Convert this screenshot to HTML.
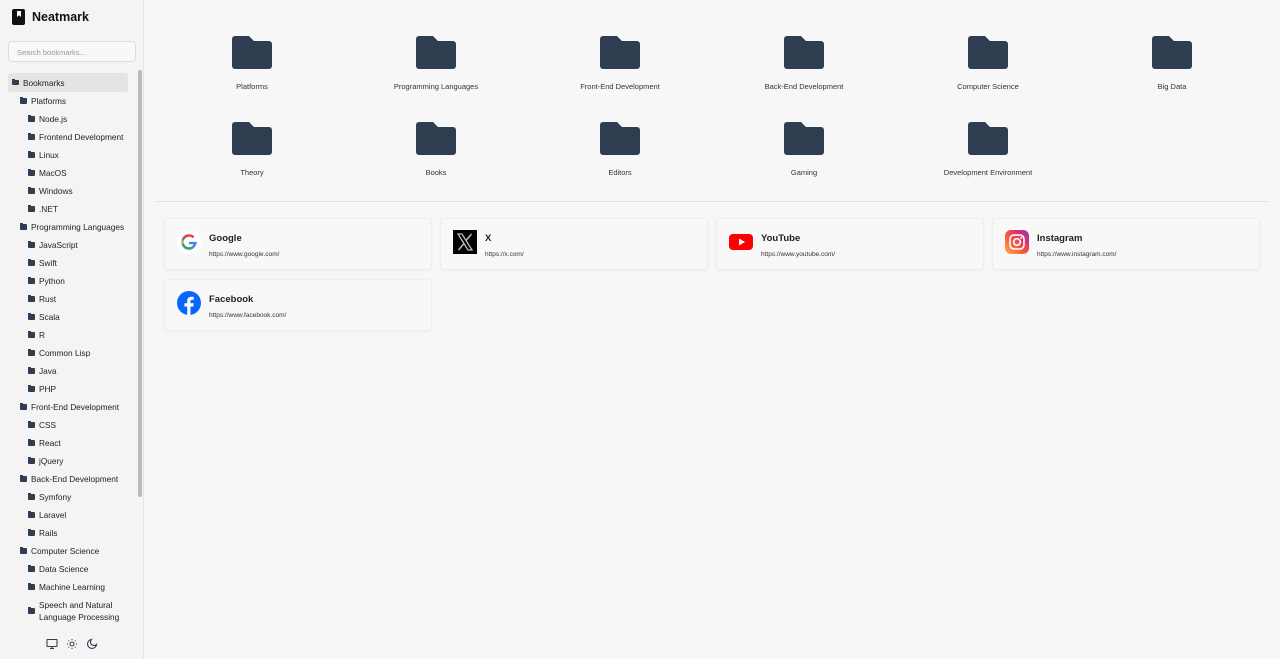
<!DOCTYPE html>
<html><head><meta charset="utf-8"><style>
*{box-sizing:border-box;margin:0;padding:0}
body{width:1280px;height:659px;overflow:hidden;background:#f7f7f7;font-family:"Liberation Sans",sans-serif;color:#222;position:relative}
.side{position:absolute;left:0;top:0;width:144px;height:659px;background:#f4f4f4;border-right:1px solid #e6e6e6}
.logo{position:absolute;left:12px;top:9px;width:13px;height:16px;background:#111;border-radius:2px}
.logo:after{content:"";position:absolute;left:5px;top:2px;width:4px;height:6px;background:#fff;clip-path:polygon(0 0,100% 0,100% 100%,50% 70%,0 100%)}
.brand{position:absolute;left:32px;top:10px;font-size:12.5px;font-weight:bold;color:#111}
.search{position:absolute;left:8px;top:41px;width:128px;height:21px;border:1px solid #ddd;border-radius:4px;background:#f8f8f8;font-size:7.5px;color:#999;padding:6px 8px}
.tree{position:absolute;left:8px;top:73px;width:120px}
.it{height:18px;display:flex;align-items:center;font-size:8.3px;color:#222;white-space:nowrap}
.it i{display:inline-block;width:7px;height:5.5px;background:#2f3d50;border-radius:1px;margin-right:4px;position:relative}
.it i:before{content:"";position:absolute;left:0;top:-1px;width:3px;height:1.5px;background:#2f3d50}
.l0{padding-left:4px;background:#e4e4e4;border-radius:3px;height:19px}
.l1{padding-left:12px}.l2{padding-left:20px}
.sb{position:absolute;left:138px;top:70px;width:4px;height:427px;background:#bbb;border-radius:2px}
.bot{position:absolute;top:638px;font-size:10px;color:#333}
.grid{position:absolute;left:160px;top:36px;width:1104px;display:flex;flex-wrap:wrap}
.f{width:184px;height:86px;text-align:center}
.f .ic{width:40px;height:33px;margin:0 auto;position:relative;display:block}
.f span{display:block;font-size:7.5px;color:#333;margin-top:13px}
hr{position:absolute;left:156px;top:201px;width:1112px;border:0;border-top:1px solid #e2e2e2}
.card{position:absolute;width:268px;height:52px;background:#f8f8f8;border:1px solid #eee;border-radius:4px;box-shadow:0 1px 2px rgba(0,0,0,.04)}
.card .t{position:absolute;left:44px;top:14px;font-size:9.5px;font-weight:bold;color:#222}
.card .u{position:absolute;left:44px;top:32px;font-size:6.5px;color:#333}
.card .g{position:absolute;left:12px;top:11px;width:24px;height:24px}
</style></head><body>
<div class="side">
<div class="logo"></div><div class="brand">Neatmark</div>
<div class="search">Search bookmarks...</div>
<div class="tree">
<div class="it l0"><i></i>Bookmarks</div>
<div class="it l1"><i></i>Platforms</div>
<div class="it l2"><i></i>Node.js</div>
<div class="it l2"><i></i>Frontend Development</div>
<div class="it l2"><i></i>Linux</div>
<div class="it l2"><i></i>MacOS</div>
<div class="it l2"><i></i>Windows</div>
<div class="it l2"><i></i>.NET</div>
<div class="it l1"><i></i>Programming Languages</div>
<div class="it l2"><i></i>JavaScript</div>
<div class="it l2"><i></i>Swift</div>
<div class="it l2"><i></i>Python</div>
<div class="it l2"><i></i>Rust</div>
<div class="it l2"><i></i>Scala</div>
<div class="it l2"><i></i>R</div>
<div class="it l2"><i></i>Common Lisp</div>
<div class="it l2"><i></i>Java</div>
<div class="it l2"><i></i>PHP</div>
<div class="it l1"><i></i>Front-End Development</div>
<div class="it l2"><i></i>CSS</div>
<div class="it l2"><i></i>React</div>
<div class="it l2"><i></i>jQuery</div>
<div class="it l1"><i></i>Back-End Development</div>
<div class="it l2"><i></i>Symfony</div>
<div class="it l2"><i></i>Laravel</div>
<div class="it l2"><i></i>Rails</div>
<div class="it l1"><i></i>Computer Science</div>
<div class="it l2"><i></i>Data Science</div>
<div class="it l2"><i></i>Machine Learning</div>
<div class="it l2" style="height:30px;white-space:normal;line-height:12px"><i style="flex:none"></i>Speech and Natural Language Processing</div>
</div>
<div class="sb"></div>
<svg class="bot" style="left:46px" width="12" height="12" viewBox="0 0 24 24" fill="none" stroke="#2f3d50" stroke-width="2.2"><rect x="2" y="3" width="20" height="14" rx="1"/><path d="M8 21h8M12 17v4"/></svg>
<svg class="bot" style="left:66px" width="12" height="12" viewBox="0 0 24 24" fill="none" stroke="#2f3d50" stroke-width="2"><circle cx="12" cy="12" r="4"/><path d="M12 2v2M12 20v2M2 12h2M20 12h2M4.9 4.9l1.4 1.4M17.7 17.7l1.4 1.4M4.9 19.1l1.4-1.4M17.7 6.3l1.4-1.4"/></svg>
<svg class="bot" style="left:86px" width="12" height="12" viewBox="0 0 24 24" fill="none" stroke="#2f3d50" stroke-width="2.2"><path d="M21 13A9 9 0 1 1 11 3a7 7 0 0 0 10 10z"/></svg>
</div>
<div class="grid">
<div class="f"><svg class="ic" viewBox="0 0 40 33"><path d="M3 0h14l5 5h15a3 3 0 0 1 3 3v22a3 3 0 0 1-3 3H3a3 3 0 0 1-3-3V3a3 3 0 0 1 3-3z" fill="#2f3d50"/></svg><span>Platforms</span></div>
<div class="f"><svg class="ic" viewBox="0 0 40 33"><path d="M3 0h14l5 5h15a3 3 0 0 1 3 3v22a3 3 0 0 1-3 3H3a3 3 0 0 1-3-3V3a3 3 0 0 1 3-3z" fill="#2f3d50"/></svg><span>Programming Languages</span></div>
<div class="f"><svg class="ic" viewBox="0 0 40 33"><path d="M3 0h14l5 5h15a3 3 0 0 1 3 3v22a3 3 0 0 1-3 3H3a3 3 0 0 1-3-3V3a3 3 0 0 1 3-3z" fill="#2f3d50"/></svg><span>Front-End Development</span></div>
<div class="f"><svg class="ic" viewBox="0 0 40 33"><path d="M3 0h14l5 5h15a3 3 0 0 1 3 3v22a3 3 0 0 1-3 3H3a3 3 0 0 1-3-3V3a3 3 0 0 1 3-3z" fill="#2f3d50"/></svg><span>Back-End Development</span></div>
<div class="f"><svg class="ic" viewBox="0 0 40 33"><path d="M3 0h14l5 5h15a3 3 0 0 1 3 3v22a3 3 0 0 1-3 3H3a3 3 0 0 1-3-3V3a3 3 0 0 1 3-3z" fill="#2f3d50"/></svg><span>Computer Science</span></div>
<div class="f"><svg class="ic" viewBox="0 0 40 33"><path d="M3 0h14l5 5h15a3 3 0 0 1 3 3v22a3 3 0 0 1-3 3H3a3 3 0 0 1-3-3V3a3 3 0 0 1 3-3z" fill="#2f3d50"/></svg><span>Big Data</span></div>
<div class="f"><svg class="ic" viewBox="0 0 40 33"><path d="M3 0h14l5 5h15a3 3 0 0 1 3 3v22a3 3 0 0 1-3 3H3a3 3 0 0 1-3-3V3a3 3 0 0 1 3-3z" fill="#2f3d50"/></svg><span>Theory</span></div>
<div class="f"><svg class="ic" viewBox="0 0 40 33"><path d="M3 0h14l5 5h15a3 3 0 0 1 3 3v22a3 3 0 0 1-3 3H3a3 3 0 0 1-3-3V3a3 3 0 0 1 3-3z" fill="#2f3d50"/></svg><span>Books</span></div>
<div class="f"><svg class="ic" viewBox="0 0 40 33"><path d="M3 0h14l5 5h15a3 3 0 0 1 3 3v22a3 3 0 0 1-3 3H3a3 3 0 0 1-3-3V3a3 3 0 0 1 3-3z" fill="#2f3d50"/></svg><span>Editors</span></div>
<div class="f"><svg class="ic" viewBox="0 0 40 33"><path d="M3 0h14l5 5h15a3 3 0 0 1 3 3v22a3 3 0 0 1-3 3H3a3 3 0 0 1-3-3V3a3 3 0 0 1 3-3z" fill="#2f3d50"/></svg><span>Gaming</span></div>
<div class="f"><svg class="ic" viewBox="0 0 40 33"><path d="M3 0h14l5 5h15a3 3 0 0 1 3 3v22a3 3 0 0 1-3 3H3a3 3 0 0 1-3-3V3a3 3 0 0 1 3-3z" fill="#2f3d50"/></svg><span>Development Environment</span></div>
</div>
<hr>
<div class="card" style="left:164px;top:218px"><svg class="g" viewBox="0 0 24 24"><circle cx="12" cy="12" r="12" fill="#fff"/><path d="M12 5.5a6.5 6.5 0 1 0 6.4 7.6H12" fill="none" stroke="#4285f4" stroke-width="2.4"/><path d="M6.3 8.8A6.5 6.5 0 0 1 16.6 7.4" fill="none" stroke="#ea4335" stroke-width="2.4"/><path d="M5.6 13.5a6.5 6.5 0 0 0 0-3" fill="none" stroke="#fbbc05" stroke-width="2.4"/><path d="M6.3 15.2A6.5 6.5 0 0 0 16 17.2" fill="none" stroke="#34a853" stroke-width="2.4"/></svg><div class="t">Google</div><div class="u">https://www.google.com/</div></div>
<div class="card" style="left:440px;top:218px"><svg class="g" viewBox="0 0 24 24"><rect width="24" height="24" fill="#000"/><path d="M5 4h4l10 16h-4z" fill="none" stroke="#bbb" stroke-width="1.3"/><path d="M18.5 4L13 10.5M5.5 20l5.5-6.5" stroke="#bbb" stroke-width="1.5"/></svg><div class="t">X</div><div class="u">https://x.com/</div></div>
<div class="card" style="left:716px;top:218px"><svg class="g" viewBox="0 0 24 24"><rect x="0" y="4" width="24" height="16" rx="4" fill="#f00"/><path d="M10 8.5v7l6-3.5z" fill="#fff"/></svg><div class="t">YouTube</div><div class="u">https://www.youtube.com/</div></div>
<div class="card" style="left:992px;top:218px"><svg class="g" viewBox="0 0 24 24"><defs><linearGradient id="ig" x1="0" y1="1" x2="1" y2="0"><stop offset="0" stop-color="#fcaf45"/><stop offset=".4" stop-color="#f56040"/><stop offset=".7" stop-color="#e1306c"/><stop offset="1" stop-color="#833ab4"/></linearGradient></defs><rect width="24" height="24" rx="6" fill="url(#ig)"/><rect x="5" y="5" width="14" height="14" rx="4" fill="none" stroke="#fff" stroke-width="1.6"/><circle cx="12" cy="12" r="3.3" fill="none" stroke="#fff" stroke-width="1.6"/><circle cx="16.3" cy="7.7" r="1" fill="#fff"/></svg><div class="t">Instagram</div><div class="u">https://www.instagram.com/</div></div>
<div class="card" style="left:164px;top:279px"><svg class="g" viewBox="0 0 24 24"><circle cx="12" cy="12" r="12" fill="#0866ff"/><path d="M13.5 24v-8.5h2.8l.4-3.2h-3.2v-2c0-.9.3-1.6 1.6-1.6h1.7V5.9c-.3 0-1.3-.1-2.5-.1-2.5 0-4.1 1.5-4.1 4.2v2.3H7.4v3.2h2.8V24z" fill="#fff"/></svg><div class="t">Facebook</div><div class="u">https://www.facebook.com/</div></div>
</body></html>
